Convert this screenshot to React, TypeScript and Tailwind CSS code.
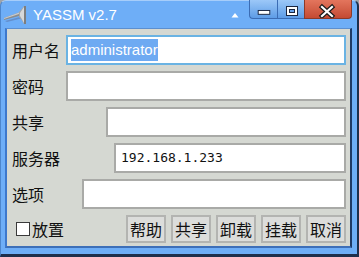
import React from "react";

const cjk = "font-['Noto_Sans_CJK_SC','Noto_Sans_CJK_JP',sans-serif]";

function Label({ text, w }: { text: string; w: string }) {
  return (
    <div className={`${w} shrink-0 pl-[5px] text-[16px] leading-none text-[#111] ${cjk}`}>{text}</div>
  );
}

function Field({ children, focus }: { children?: React.ReactNode; focus?: boolean }) {
  return (
    <div
      className={`flex-1 h-full bg-white flex items-center border-2 ${
        focus ? "border-[#6ab3e3]" : "border-[#a9aaa7]"
      }`}
    >
      {children}
    </div>
  );
}

function Btn({ text }: { text: string }) {
  return (
    <div
      className={`w-[40px] h-[28px] flex items-center justify-center bg-[#dcdddb] border-2 border-[#b3b4b1] text-[16px] text-[#111] ${cjk}`}
    >
      {text}
    </div>
  );
}

export default function App() {
  return (
    <div className="w-[359px] h-[257px] bg-[#9ea3a8]">
      <div className="w-full h-full flex flex-col rounded-t-[6px] bg-[#6eaef7] border-t border-t-[#a6cdfa] border-l border-l-[#4d86cc] border-r-2 border-r-[#1e2f4c] border-b-[3px] border-b-[#1e2f4c]">
        {/* title bar */}
        <div className="h-[27px] flex items-start shrink-0">
          <div className="ml-[2px] mt-[4px] w-[24px] h-[20px]">
            <svg width="24" height="20" viewBox="0 0 24 20">
              <path d="M1 13 L16 7.5 L16 11 L1 15 Z" fill="#8a8c8e" />
              <path d="M1 13 L16 7.5 L16 9 L1 14 Z" fill="#c8cacc" />
              <path d="M2 16 L17 12 L18 13.5 L4 17 Z" fill="#5c6fa0" opacity="0.5" />
              <path d="M16 7 Q18 5 21 1 L23 1 L23 19 L21 19 Q19 15 16 12 Z" fill="#a4a6a8" />
              <path d="M17 8 Q19 5 21 2 L21 18 Q19 14 17 11 Z" fill="#d6d8da" />
              <path d="M21 1 L23 1 L23 19 L21 19 Z" fill="#7c7e80" />
            </svg>
          </div>
          <div className="ml-[6px] mt-[4px] text-[15px] leading-[20px] text-white font-['Liberation_Sans',sans-serif]">
            YASSM v2.7
          </div>
          <div className="flex-1" />
          <svg width="8" height="6" viewBox="0 0 8 6" className="mt-[11px] mr-[10px]">
            <path d="M0.5 5.5 L4 1 L7.5 5.5 Z" fill="#ffffff" />
          </svg>
          <div className="flex -mt-[1px] mr-[5px] h-[19px]">
            <div className="w-[28px] h-[19px] rounded-bl-[4px] bg-gradient-to-b from-[#9cc8f8] to-[#5d9ce6] border-l border-b border-[#3b6cb4] flex items-center">
              <svg width="28" height="19" viewBox="0 0 28 19">
                <rect x="8.5" y="10.5" width="12" height="4" fill="#fff" stroke="#1b2640" />
              </svg>
            </div>
            <div className="w-[27px] h-[19px] bg-gradient-to-b from-[#9cc8f8] to-[#5d9ce6] border-l border-b border-[#3b6cb4]">
              <svg width="27" height="19" viewBox="0 0 27 19">
                <rect x="8.5" y="6.5" width="11" height="9" fill="#fff" stroke="#1b2640" />
                <rect x="11.5" y="9.5" width="5" height="3" fill="#6aa6ee" stroke="#1b2640" />
              </svg>
            </div>
            <div className="w-[48px] h-[19px] rounded-br-[4px] bg-gradient-to-b from-[#e3755d] to-[#c44a33] border-l border-b border-r border-[#8c3a2a]">
              <svg width="46" height="18" viewBox="0 0 46 18">
                <path d="M17 7 L27 16 M27 7 L17 16" stroke="#1b1b1b" strokeWidth="4.5" strokeLinecap="square" />
                <path d="M17 7 L27 16 M27 7 L17 16" stroke="#ffffff" strokeWidth="2.2" strokeLinecap="square" />
              </svg>
            </div>
          </div>
        </div>
        {/* body frame */}
        <div className="flex-1 pl-[4px] pr-[5px] pb-[6px]">
          <div className="w-full h-full bg-[#d5d8d2] border-t border-t-[#5b8fd0] border-l-2 border-l-[#3d78cc] border-r-2 border-r-[#1f3a66] border-b-2 border-b-[#3d6fb8]">
            <div className="flex flex-col pt-[6px] pr-[4px] gap-[6px]">
              <div className="h-[30px] flex items-center">
                <Label text="用户名" w="w-[59px]" />
                <Field focus>
                  <span className="ml-[3px] h-[22px] leading-[22px] bg-[#6eaaf2] text-white text-[15px] font-['Liberation_Sans',sans-serif]">
                    administrator
                  </span>
                </Field>
              </div>
              <div className="h-[30px] flex items-center">
                <Label text="密码" w="w-[59px]" />
                <Field />
              </div>
              <div className="h-[30px] flex items-center">
                <Label text="共享" w="w-[99px]" />
                <Field />
              </div>
              <div className="h-[30px] flex items-center">
                <Label text="服务器" w="w-[107px]" />
                <Field>
                  <span className="ml-[5px] text-[13px] text-[#111] font-['DejaVu_Sans_Mono',monospace]">
                    192.168.1.233
                  </span>
                </Field>
              </div>
              <div className="h-[30px] flex items-center">
                <Label text="选项" w="w-[75px]" />
                <Field />
              </div>
              <div className="h-[28px] flex items-center pl-[9px]">
                <div className="w-[14px] h-[14px] bg-white border border-[#3a3a3a]" />
                <div className={`ml-[2px] text-[16px] leading-none text-[#111] ${cjk}`}>放置</div>
                <div className="ml-auto flex gap-[5px]">
                  <Btn text="帮助" />
                  <Btn text="共享" />
                  <Btn text="卸载" />
                  <Btn text="挂载" />
                  <Btn text="取消" />
                </div>
              </div>
            </div>
          </div>
        </div>
      </div>
    </div>
  );
}
